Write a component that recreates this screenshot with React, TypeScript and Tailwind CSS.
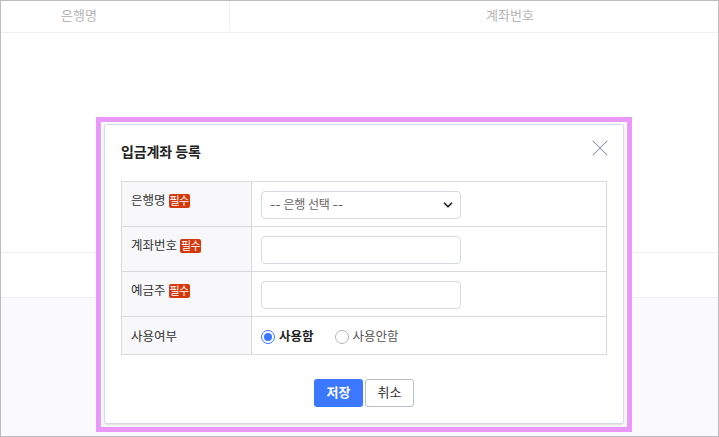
import { ChevronDown, X } from 'lucide-react'

const FONT = "font-['Inter','Noto_Sans_CJK_KR',sans-serif]"

function Badge() {
  return (
    <span className="ml-[3px] mt-[2px] inline-flex h-[14px] w-[21px] items-center justify-center rounded-[2px] bg-[#d4380d] text-[11px] leading-none tracking-[-0.5px] text-white">
      필수
    </span>
  )
}

function Row({ label, required, last, children }: { label: string; required?: boolean; last?: boolean; children: React.ReactNode }) {
  return (
    <div className={`flex ${last ? 'h-[37px] items-stretch' : 'h-[45px] border-b border-[#d9d9d9]'}`}>
      <div className={`flex w-[130px] shrink-0 border-r border-[#d9d9d9] bg-[#f8f8fa] pl-[9px] text-[12.5px] text-[#333] ${last ? 'items-center pt-[3px]' : 'items-start pt-[10px]'}`}>
        {label}
        {required && <Badge />}
      </div>
      <div className="flex flex-1 items-center pl-[9px] pt-[2px]">{children}</div>
    </div>
  )
}

export default function App() {
  return (
    <div className={`relative flex h-[437px] w-[719px] flex-col overflow-hidden border border-[#bdbdbd] bg-white ${FONT}`}>
      <div className="flex h-[32px] shrink-0 border-b border-[#f0f0f0] pb-[2px] text-[13px] text-[#b5b5b5]">
        <div className="flex w-[229px] items-center border-r border-[#f0f0f0] pl-[60px]">은행명</div>
        <div className="flex flex-1 items-center pl-[256px]">계좌번호</div>
      </div>
      <div className="h-[220px] shrink-0 border-b border-[#f0f0f0]" />
      <div className="h-[45px] shrink-0 border-b border-[#f0f0f0]" />
      <div className="flex-1 bg-[#fafafc]" />

      <div className="absolute left-[95px] top-[116px] h-[315px] w-[536px] border-[5px] border-[#ea98fa] bg-white pl-[3px] pt-[2px]">
        <div className="relative h-[300px] w-[520px] rounded-[3px] border border-[#d5d9e2] bg-white px-4 shadow-[0_1px_3px_rgba(0,0,0,0.15)]">
          <h2 className="pt-[17px] text-[14px] font-bold leading-[20px] tracking-[-0.1px] text-[#222]">입금계좌 등록</h2>
          <X strokeWidth={0.9} className="absolute right-[9px] top-[9px] h-[28px] w-[28px] text-[#8b8f9e]" />

          <div className="mt-[19px] w-[486px] border border-[#d9d9d9]">
            <Row label="은행명" required>
              <div className="flex h-[28px] w-[200px] items-center justify-between rounded-[4px] border border-[#d5d9e2] bg-white pl-[8px] pr-[5px] text-[12px] tracking-[-0.3px] text-[#666]">
                -- 은행 선택 --
                <ChevronDown strokeWidth={3} className="h-[14px] w-[14px] text-[#222]" />
              </div>
            </Row>
            <Row label="계좌번호" required>
              <div className="h-[28px] w-[200px] rounded-[4px] border border-[#d5d9e2] bg-white" />
            </Row>
            <Row label="예금주" required>
              <div className="h-[28px] w-[200px] rounded-[4px] border border-[#d5d9e2] bg-white" />
            </Row>
            <Row label="사용여부" last>
              <div className="flex items-start text-[12.5px]">
                <span className="mt-[2px] flex h-[14px] w-[14px] items-center justify-center rounded-full border border-[#3b78ff]">
                  <span className="h-[8px] w-[8px] rounded-full bg-[#3b78ff]" />
                </span>
                <span className="ml-[4px] font-bold leading-[18px] text-[#222]">사용함</span>
                <span className="ml-[21px] mt-[2px] h-[14px] w-[14px] rounded-full border border-[#b0b4c0]" />
                <span className="ml-[4px] leading-[18px] text-[#555]">사용안함</span>
              </div>
            </Row>
          </div>

          <div className="mt-[24px] flex justify-center gap-[2px]">
            <button type="button" className="h-[28px] w-[49px] rounded-[3px] bg-[#3b78ff] text-[13px] font-bold text-white">저장</button>
            <button type="button" className="h-[28px] w-[49px] rounded-[3px] border border-[#b9bccb] bg-white text-[13px] text-[#333]">취소</button>
          </div>
        </div>
      </div>
    </div>
  )
}
